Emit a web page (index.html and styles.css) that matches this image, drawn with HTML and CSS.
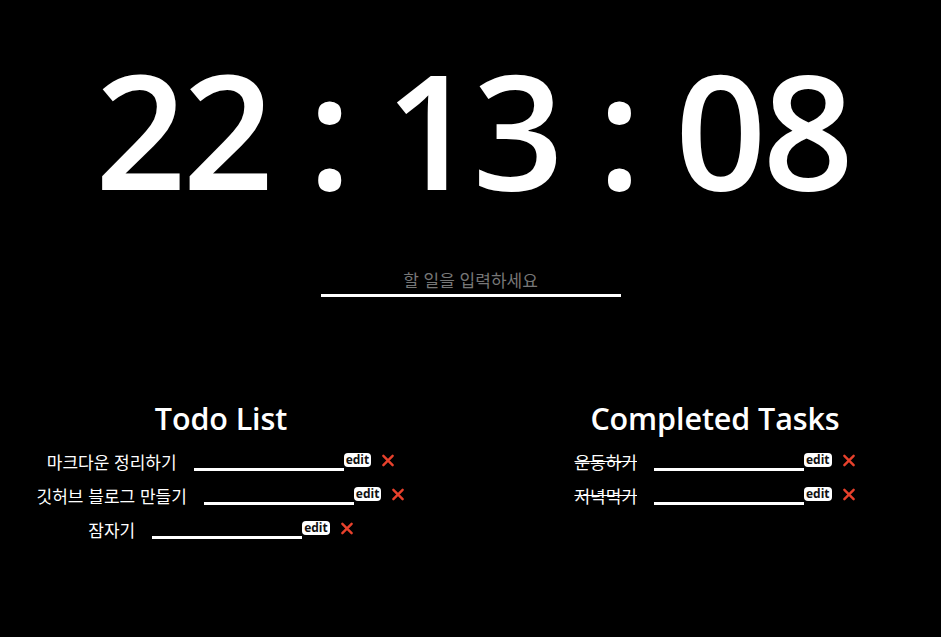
FILE: index.html
```html
<!DOCTYPE html>
<html lang="ko">
<head>
<meta charset="utf-8">
<title>Todo Clock</title>
<link rel="stylesheet" href="styles.css">
</head>
<body>
<main class="app">
  <h1 class="clock">22 : 13 : 08</h1>
  <form class="entry">
    <input class="entry-input" type="text" placeholder="할 일을 입력하세요">
  </form>
  <section class="lists">
    <div class="list">
      <h2 class="list-title">Todo List</h2>
      <ul class="items">
        <li class="item"><span class="item-text">마크다운 정리하기</span><input class="item-input" type="text"><button class="edit" type="button">edit</button><button class="del" type="button"><svg viewBox="0 0 14 14" width="14" height="13"><path d="M2 2L12 12M12 2L2 12" stroke="#e8412c" stroke-width="2.6" stroke-linecap="round"/></svg></button></li>
        <li class="item"><span class="item-text">깃허브 블로그 만들기</span><input class="item-input" type="text"><button class="edit" type="button">edit</button><button class="del" type="button"><svg viewBox="0 0 14 14" width="14" height="13"><path d="M2 2L12 12M12 2L2 12" stroke="#e8412c" stroke-width="2.6" stroke-linecap="round"/></svg></button></li>
        <li class="item"><span class="item-text">잠자기</span><input class="item-input" type="text"><button class="edit" type="button">edit</button><button class="del" type="button"><svg viewBox="0 0 14 14" width="14" height="13"><path d="M2 2L12 12M12 2L2 12" stroke="#e8412c" stroke-width="2.6" stroke-linecap="round"/></svg></button></li>
      </ul>
    </div>
    <div class="list">
      <h2 class="list-title">Completed Tasks</h2>
      <ul class="items">
        <li class="item"><span class="item-text done">운동하기</span><input class="item-input" type="text"><button class="edit" type="button">edit</button><button class="del" type="button"><svg viewBox="0 0 14 14" width="14" height="13"><path d="M2 2L12 12M12 2L2 12" stroke="#e8412c" stroke-width="2.6" stroke-linecap="round"/></svg></button></li>
        <li class="item"><span class="item-text done">저녁먹기</span><input class="item-input" type="text"><button class="edit" type="button">edit</button><button class="del" type="button"><svg viewBox="0 0 14 14" width="14" height="13"><path d="M2 2L12 12M12 2L2 12" stroke="#e8412c" stroke-width="2.6" stroke-linecap="round"/></svg></button></li>
      </ul>
    </div>
  </section>
</main>
</body>
</html>
```
FILE: styles.css
```css
html, body {
  margin: 0;
  padding: 0;
  background: #000;
  height: 100%;
}
body {
  color: #fff;
  font-family: "Open Sans", "Noto Sans CJK KR", sans-serif;
  overflow: hidden;
}
.app {
  display: flex;
  flex-direction: column;
  align-items: center;
}
.clock {
  margin: 48px 0 0;
  font-size: 160px;
  font-weight: 600;
  line-height: 160px;
  height: 160px;
  letter-spacing: -4px;
  white-space: pre;
  text-indent: 4px;
}
.entry {
  margin-top: 60px;
  width: 300px;
}
.entry-input {
  display: block;
  width: 300px;
  box-sizing: border-box;
  background: transparent;
  border: none;
  border-bottom: 3px solid #fff;
  outline: none;
  color: #fff;
  text-align: center;
  font-family: "Noto Sans CJK KR", sans-serif;
  font-size: 17px;
  height: 29px;
  padding: 0 0 3px;
}
.entry-input::placeholder {
  color: #777;
}
.lists {
  align-self: stretch;
  display: grid;
  grid-template-columns: 440px 440px;
  column-gap: 54px;
  padding-left: 1px;
  margin-top: 101px;
}
.list {
  display: flex;
  flex-direction: column;
  align-items: center;
}
.list-title {
  margin: 0;
  font-size: 30.5px;
  font-weight: 600;
  line-height: 40px;
  letter-spacing: -0.1px;
}
.items {
  list-style: none;
  margin: 0;
  padding: 0;
  display: flex;
  flex-direction: column;
  align-items: center;
}
.item {
  display: flex;
  align-items: flex-end;
  height: 34px;
}
.item-text {
  font-family: "Noto Sans CJK KR", sans-serif;
  font-size: 17px;
  line-height: 20px;
}
.item-text.done {
  text-decoration: line-through;
}
.item-input {
  margin-left: 17px;
  width: 150px;
  box-sizing: border-box;
  height: 10px;
  padding: 0;
  background: transparent;
  border: none;
  border-bottom: 3px solid #fff;
  outline: none;
  margin-bottom: 1px;
}
.edit {
  margin: 0 0 5px;
  padding: 0 2px;
  height: 14px;
  border: none;
  border-radius: 4px;
  background: #fff;
  color: #111;
  font-family: "Open Sans", sans-serif;
  font-weight: 700;
  font-size: 12px;
  line-height: 14px;
}
.del {
  margin: 0 0 5px 10px;
  padding: 0;
  border: none;
  background: transparent;
  display: flex;
  line-height: 0;
}
```
